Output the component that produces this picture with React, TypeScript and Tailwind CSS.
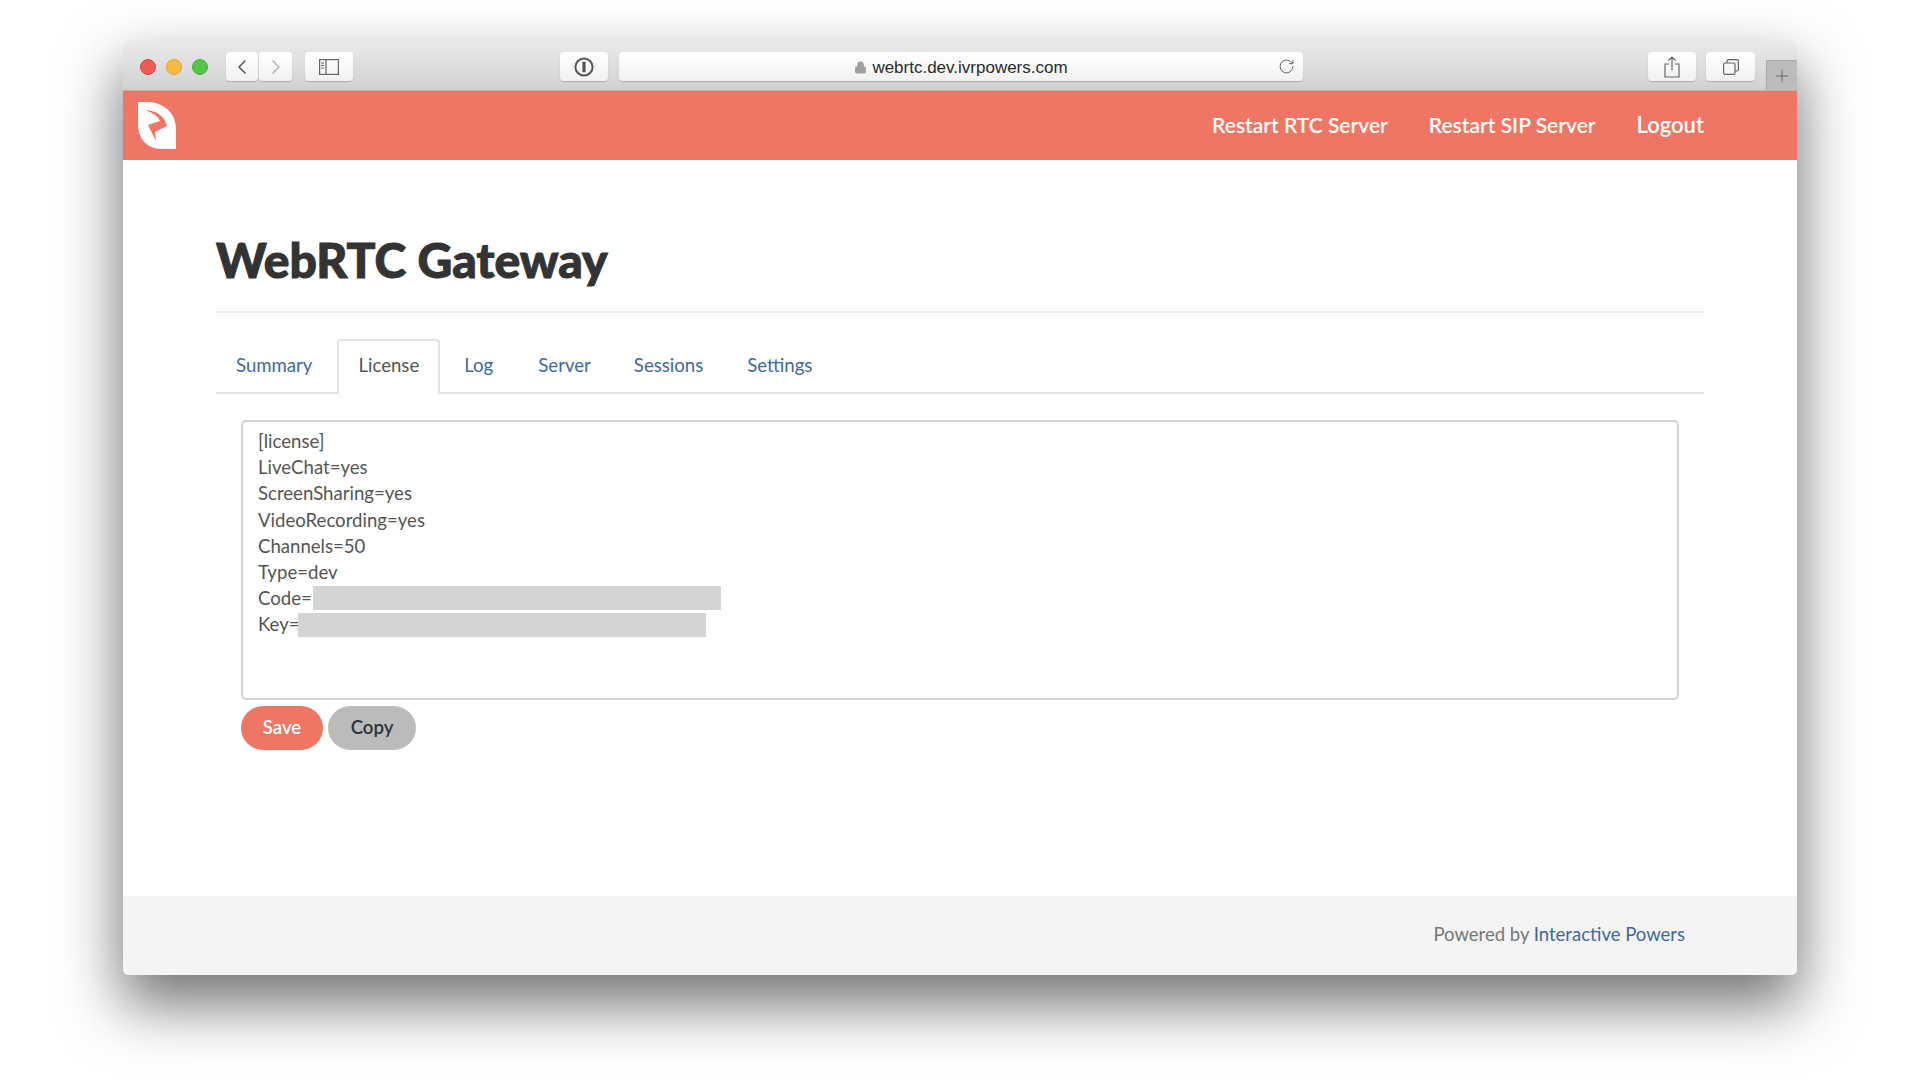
import { ChevronLeft, ChevronRight, Lock, Plus, RotateCw } from 'lucide-react';

const tabs = ['Summary', 'License', 'Log', 'Server', 'Sessions', 'Settings'];
const licenseLines = ['[license]', 'LiveChat=yes', 'ScreenSharing=yes', 'VideoRecording=yes', 'Channels=50', 'Type=dev'];

function ToolButton({ className, children }: { className: string; children?: React.ReactNode }) {
  return (
    <div className={`h-[29px] flex items-center justify-center rounded-[4px] bg-gradient-to-b from-white to-[#f1f1f1] shadow-[0_1px_1px_rgba(0,0,0,0.2)] ${className}`}>
      {children}
    </div>
  );
}

function Logo() {
  return (
    <svg viewBox="0 0 38 47" className="w-[38px] h-[47px] ml-[15px]">
      <path d="M0 1Q0 0 1 0L12 0C28 2 38 12 38 28L38 47L24 47C8 47 0 36 0 22Z" fill="#ffffff" />
      <path d="M8 8C18 9 27 14 29 24L17 30L18 39L10 23L22 19C20 14 14 11 8 8Z" fill="#ef7664" />
    </svg>
  );
}

function TitleBar() {
  return (
    <div className="relative h-[50px] shrink-0 flex items-center pt-[2px] bg-gradient-to-b from-[#ebeaeb] to-[#d2d1d2] border-b border-[#b4b4b4] rounded-t-[6px]">
      <div className="flex items-center gap-[10px] ml-[17px]">
        <span className="w-4 h-4 rounded-full bg-[#ee5a55] border border-[#d9453f]" />
        <span className="w-4 h-4 rounded-full bg-[#f7bb3e] border border-[#e0a32d]" />
        <span className="w-4 h-4 rounded-full bg-[#55c74a] border border-[#44b03a]" />
      </div>
      <ToolButton className="w-[32px] ml-[18px]">
        <ChevronLeft className="w-[24px] h-[24px] text-[#555555]" strokeWidth={1.5} />
      </ToolButton>
      <ToolButton className="w-[33px] ml-[1px]">
        <ChevronRight className="w-[24px] h-[24px] text-[#b3b3b3]" strokeWidth={1.5} />
      </ToolButton>
      <ToolButton className="w-[48px] ml-[13px]">
        <svg viewBox="0 0 20 16" className="w-[20px] h-[16px]" fill="none" stroke="#666666" strokeWidth="1.2">
          <rect x="0.6" y="0.6" width="18.8" height="14.8" />
          <path d="M7 1V15M2 4H5M2 6.5H5M2 9H5" />
        </svg>
      </ToolButton>
      <ToolButton className="w-[48px] ml-[207px]">
        <svg viewBox="0 0 20 20" className="w-[20px] h-[20px]">
          <circle cx="10" cy="10" r="8.6" fill="none" stroke="#555555" strokeWidth="2" />
          <rect x="8.4" y="4.8" width="3.2" height="10.4" rx="1" fill="#555555" />
        </svg>
      </ToolButton>
      <ToolButton className="w-[684px] ml-[11px] relative">
        <div className="flex items-center gap-[5px] pt-[2px] font-['Liberation_Sans',sans-serif] text-[17px] text-[#2b2b2b]">
          <Lock className="w-[13px] h-[13px] text-[#a0a0a0]" fill="#a0a0a0" strokeWidth={2} />
          <span>webrtc.dev.ivrpowers.com</span>
        </div>
        <RotateCw className="absolute right-[8px] top-[6px] w-[17px] h-[17px] text-[#666666]" strokeWidth={1.4} />
      </ToolButton>
      <ToolButton className="w-[48px] ml-auto">
        <svg viewBox="0 0 16 22" className="w-[16px] h-[22px]" fill="none" stroke="#666666" strokeWidth="1.2">
          <path d="M5 8H1V21H15V8H11M8 14V1M4.5 4.5L8 1L11.5 4.5" />
        </svg>
      </ToolButton>
      <ToolButton className="w-[49px] ml-[10px] mr-[42px]">
        <svg viewBox="0 0 16 16" className="w-[16px] h-[16px]" fill="none" stroke="#666666" strokeWidth="1.2">
          <rect x="0.6" y="4" width="11.4" height="11.4" rx="1.5" />
          <path d="M4 4V2Q4 0.6 5.4 0.6H14Q15.4 0.6 15.4 2V10.6Q15.4 12 14 12H12" />
        </svg>
      </ToolButton>
      <div className="absolute right-0 bottom-0 w-[31px] h-[30px] flex items-center justify-center bg-[#bdbcbd] border-l border-t border-[#a9a9a9]">
        <Plus className="w-[20px] h-[20px] text-[#666666]" strokeWidth={1.2} />
      </div>
    </div>
  );
}

function Navbar() {
  return (
    <header className="h-[69px] shrink-0 flex items-center justify-between bg-[#ef7664] pr-[93px] text-white text-[21px] font-semibold">
      <Logo />
      <nav className="flex items-center gap-[41px] pb-[2px]">
        <a>Restart RTC Server</a>
        <a>Restart SIP Server</a>
        <a className="text-[22px]">Logout</a>
      </nav>
    </header>
  );
}

function Tabs() {
  return (
    <ul className="flex h-[55px] mt-[26px] border-b-2 border-[#e3e3e3] text-[18.6px]">
      {tabs.map((tab) => (
        <li
          key={tab}
          className={
            tab === 'License'
              ? 'h-[55px] flex items-center px-[19px] pb-[4px] mr-[4px] text-[#555555] bg-white border-2 border-b-0 border-[#e3e3e3] rounded-t-[4px]'
              : tab === 'Summary' || tab === 'Log'
                ? 'h-[53px] flex items-center px-[20px] pt-[1px] mr-[5px] text-[#40699f]'
                : tab === 'Server'
                  ? 'h-[53px] flex items-center px-[20px] pt-[1px] mr-[3px] text-[#40699f]'
                  : 'h-[53px] flex items-center px-[20px] pt-[1px] mr-[4px] text-[#40699f]'
          }
        >
          {tab}
        </li>
      ))}
    </ul>
  );
}

export default function App() {
  return (
    <div className="w-[1920px] h-[1080px] overflow-hidden bg-white pt-[41px] pl-[123px] font-['Lato',sans-serif]">
      <div className="w-[1674px] h-[934px] flex flex-col bg-white rounded-[6px] shadow-[0_28px_60px_2px_rgba(0,0,0,0.55)]">
        <TitleBar />
        <Navbar />
        <main className="flex-1 px-[93px]">
          <h1 className="h-[153px] pt-[71px] border-b-2 border-[#eeeeee] text-[48px] leading-[58px] font-black text-[#333333] [-webkit-text-stroke:1px_#333333]">
            WebRTC Gateway
          </h1>
          <Tabs />
          <div className="mx-[25px] mt-[26px] h-[280px] px-[15px] pt-[6px] border-2 border-[#d2d2d2] rounded-[5px] text-[18.6px] leading-[26.2px] text-[#555555]">
            {licenseLines.map((line) => (
              <div key={line}>{line}</div>
            ))}
            <div className="flex items-center">
              Code=<span className="w-[408px] h-[24px] ml-[1px] bg-[#d4d4d4]" />
            </div>
            <div className="flex items-center">
              Key=<span className="w-[408px] h-[24px] -ml-[2px] bg-[#d4d4d4]" />
            </div>
          </div>
          <div className="flex gap-[5px] mx-[25px] mt-[6px] text-[18.6px] font-semibold">
            <button className="w-[82px] h-[44px] rounded-full bg-[#ef7664] text-white">Save</button>
            <button className="w-[88px] h-[44px] rounded-full bg-[#bbbbbb] text-[#2b3238]">Copy</button>
          </div>
        </main>
        <footer className="h-[79px] shrink-0 flex items-center justify-end pr-[112px] pb-[1px] bg-[#f4f4f4] rounded-b-[6px] text-[18.5px] text-[#777777]">
          <span>
            Powered by <a className="text-[#40699f]">Interactive Powers</a>
          </span>
        </footer>
      </div>
    </div>
  );
}
